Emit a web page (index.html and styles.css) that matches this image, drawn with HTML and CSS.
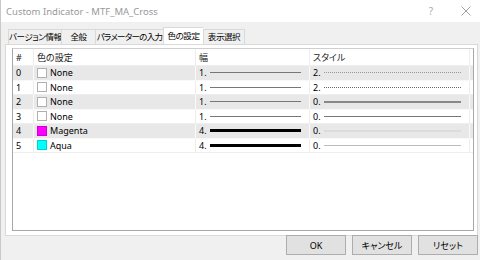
FILE: index.html
```html
<!DOCTYPE html>
<html lang="ja">
<head>
    <meta charset="UTF-8">
    <title>Custom Indicator - MTF_MA_Cross</title>
    <link rel="stylesheet" href="styles.css">
</head>
<body>
    <div class="dialog">
        <div class="titlebar">
            <span class="title">Custom Indicator - MTF_MA_Cross</span>
            <span class="help">?</span>
            <span class="close">
                <svg width="10" height="10" viewBox="0 0 10 10"><path d="M0.5 0.5L9.5 9.5M9.5 0.5L0.5 9.5" stroke="#a0a0a0" stroke-width="1" fill="none"/></svg>
            </span>
        </div>

        <div class="tabs">
            <div class="tab t1">バージョン情報</div>
            <div class="tab t2">全般</div>
            <div class="tab t3">パラメーターの入力</div>
            <div class="tab t4 active">色の設定</div>
            <div class="tab t5">表示選択</div>
        </div>

        <div class="panel">
            <div class="list">
                <div class="row head">
                    <div class="cell">#</div>
                    <div class="cell">色の設定</div>
                    <div class="cell">幅</div>
                    <div class="cell">スタイル</div>
                </div>
                <div class="row odd">
                    <div class="cell">0</div>
                    <div class="cell"><span class="swatch"></span>None</div>
                    <div class="cell">1.<span class="line w1"></span></div>
                    <div class="cell">2.<span class="line dot"></span></div>
                </div>
                <div class="row">
                    <div class="cell">1</div>
                    <div class="cell"><span class="swatch"></span>None</div>
                    <div class="cell">1.<span class="line w1"></span></div>
                    <div class="cell">2.<span class="line dash"></span></div>
                </div>
                <div class="row odd">
                    <div class="cell">2</div>
                    <div class="cell"><span class="swatch"></span>None</div>
                    <div class="cell">1.<span class="line w1"></span></div>
                    <div class="cell">0.<span class="line s2"></span></div>
                </div>
                <div class="row">
                    <div class="cell">3</div>
                    <div class="cell"><span class="swatch"></span>None</div>
                    <div class="cell">1.<span class="line w1"></span></div>
                    <div class="cell">0.<span class="line s1"></span></div>
                </div>
                <div class="row odd">
                    <div class="cell">4</div>
                    <div class="cell"><span class="swatch magenta"></span>Magenta</div>
                    <div class="cell">4.<span class="line w4"></span></div>
                    <div class="cell">0.<span class="line faint"></span></div>
                </div>
                <div class="row">
                    <div class="cell">5</div>
                    <div class="cell"><span class="swatch aqua"></span>Aqua</div>
                    <div class="cell">4.<span class="line w4"></span></div>
                    <div class="cell">0.<span class="line light"></span></div>
                </div>
            </div>
        </div>

        <div class="buttons">
            <button>OK</button>
            <button>キャンセル</button>
            <button>リセット</button>
        </div>
    </div>
</body>
</html>
```

FILE: styles.css
```css
body {
    margin: 0;
    width: 480px;
    height: 260px;
    overflow: hidden;
    background: #f0f0f0;
    font-family: "Noto Sans", "Noto Sans CJK JP", sans-serif;
    font-size: 9px;
    color: #000;
}
.dialog {
    height: 260px;
    border-left: 1px solid #c8c8c8;
    box-sizing: border-box;
}
.titlebar {
    height: 22px;
    background: #fff;
    display: flex;
    align-items: center;
    padding-left: 5px;
}
.title {
    flex: 1;
    color: #999;
    font-size: 9.5px;
}
.help {
    color: #aaa;
    font-size: 10px;
    margin-right: 28px;
}
.close {
    display: flex;
    margin-right: 9px;
}
.tabs {
    display: flex;
    align-items: flex-end;
    height: 22px;
    padding-left: 7px;
    font-size: 8.5px;
    font-feature-settings: "palt";
}
.tab {
    height: 14px;
    line-height: 14px;
    text-align: center;
    white-space: nowrap;
    background: #f0f0f0;
    border: 1px solid #d9d9d9;
    border-bottom: none;
    border-right: none;
    letter-spacing: -0.4px;
}
.t1 { width: 52px; }
.t2 { width: 33px; }
.t3 { width: 67px; letter-spacing: -0.7px; }
.t4 { width: 39px; }
.t5 { width: 40px; border-right: 1px solid #d9d9d9; }
.tab.active {
    background: #fff;
    height: 16px;
    line-height: 16px;
    border-color: #d9d9d9;
    position: relative;
    z-index: 1;
}
.panel {
    height: 192px;
    margin: 0 2px 0 4px;
    background: #fff;
    border: 1px solid #d9d9d9;
    box-sizing: border-box;
    padding: 3px 3px 4px 6px;
}
.list {
    height: 100%;
    border: 1px solid #a8a8a8;
    border-top-color: #cfcfcf;
    box-sizing: border-box;
}
.row {
    display: grid;
    grid-template-columns: 21px 162px 114px 160px;
    height: 14.5px;
    background: #fff;
    border-bottom: 1px solid #efefef;
    box-sizing: border-box;
}
.row.head {
    height: 17px;
}
.row.odd {
    background: #e8e8e8;
    border-bottom-color: #f8f8f8;
}
.cell {
    display: flex;
    align-items: center;
    padding-left: 3px;
    padding-right: 8px;
    border-right: 1px solid #ededed;
    white-space: nowrap;
    overflow: hidden;
}
.row.odd .cell {
    border-right-color: #fafafa;
}
.head .cell {
    color: #222;
    font-feature-settings: "palt";
}
.swatch {
    width: 8px;
    height: 8px;
    border: 1px solid #b0b0b0;
    background: #fff;
    margin-right: 3px;
    flex: none;
}
.swatch.magenta {
    background: #ff00ff;
    border-color: #d000d0;
}
.swatch.aqua {
    background: #00ffff;
    border-color: #00d0d0;
}
.line {
    flex: 1;
    margin-left: 3px;
    height: 0;
}
.w1 { border-top: 1px solid #777; }
.w4 { border-top: 3px solid #000; }
.dot { border-top: 1px dotted #999; }
.dash { border-top: 1px dotted #666; }
.s2 { border-top: 2px solid #888; }
.s1 { border-top: 1px solid #777; }
.faint { border-top: 2px solid #dcdcdc; }
.light { border-top: 1px solid #bbb; }
.buttons {
    display: flex;
    justify-content: flex-end;
    gap: 6px;
    padding: 0 2px 0 0;
    margin-top: -1px;
}
button {
    width: 60px;
    height: 20px;
    padding: 0;
    background: #e1e1e1;
    border: 1px solid #adadad;
    font-family: "Noto Sans", "Noto Sans CJK JP", sans-serif;
    font-size: 9px;
    color: #000;
    font-feature-settings: "palt";
}
```
